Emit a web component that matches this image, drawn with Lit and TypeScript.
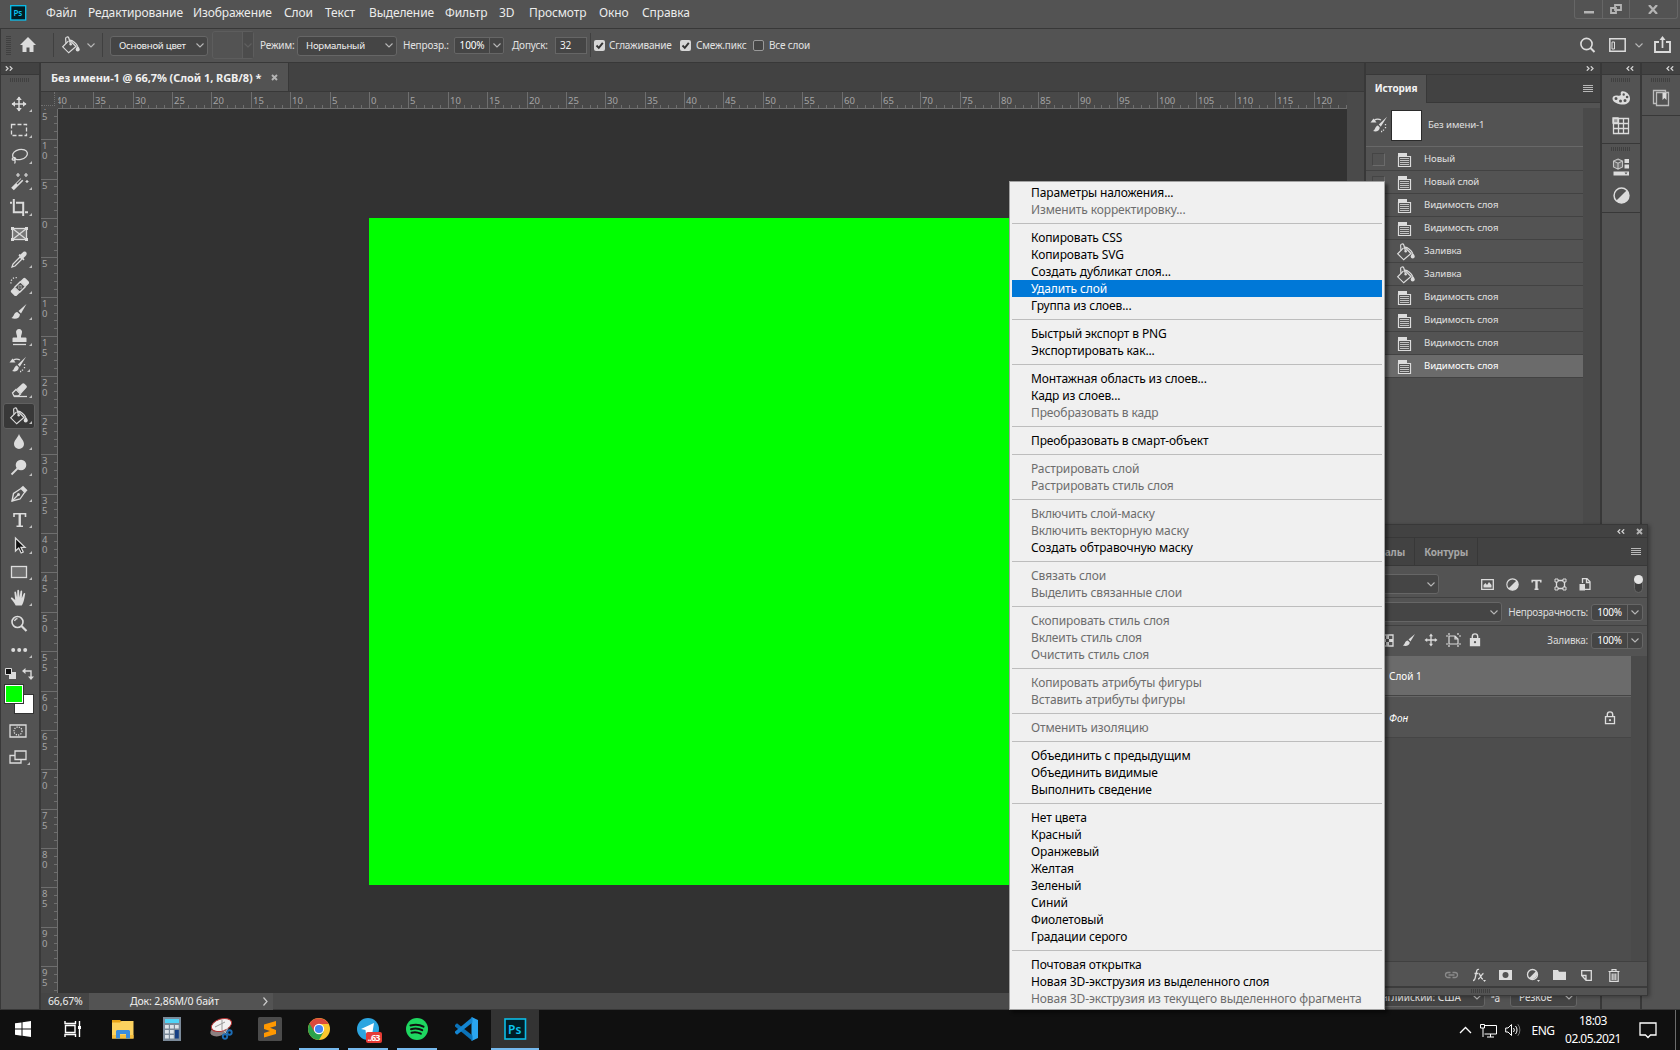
import { LitElement, html, svg, css, TemplateResult } from "lit";
import { customElement, property } from "lit/decorators.js";
import { classMap } from "lit/directives/class-map.js";

type Entry = { t: string; off?: boolean; on?: boolean } | null;

const off = (t: string): Entry => ({ t, off: true });
const it = (t: string): Entry => ({ t });

const MENU: Entry[] = [
  it("Параметры наложения..."), off("Изменить корректировку..."), null,
  it("Копировать CSS"), it("Копировать SVG"), it("Создать дубликат слоя..."),
  { t: "Удалить слой", on: true }, it("Группа из слоев..."), null,
  it("Быстрый экспорт в PNG"), it("Экспортировать как..."), null,
  it("Монтажная область из слоев..."), it("Кадр из слоев..."), off("Преобразовать в кадр"), null,
  it("Преобразовать в смарт-объект"), null,
  off("Растрировать слой"), off("Растрировать стиль слоя"), null,
  off("Включить слой-маску"), off("Включить векторную маску"), it("Создать обтравочную маску"), null,
  off("Связать слои"), off("Выделить связанные слои"), null,
  off("Скопировать стиль слоя"), off("Вклеить стиль слоя"), off("Очистить стиль слоя"), null,
  off("Копировать атрибуты фигуры"), off("Вставить атрибуты фигуры"), null,
  off("Отменить изоляцию"), null,
  it("Объединить с предыдущим"), it("Объединить видимые"), it("Выполнить сведение"), null,
  it("Нет цвета"), it("Красный"), it("Оранжевый"), it("Желтая"), it("Зеленый"),
  it("Синий"), it("Фиолетовый"), it("Градации серого"), null,
  it("Почтовая открытка"), it("Новая 3D-экструзия из выделенного слоя"),
  off("Новая 3D-экструзия из текущего выделенного фрагмента"),
];

const ic = (w: number, h: number, body: unknown) =>
  html`<svg width=${w} height=${h} viewBox="0 0 ${w} ${h}" fill="none" stroke="#dcdcdc" stroke-width="1.3">${body}</svg>`;

const F = "#dcdcdc";

const bucket = ic(20, 18, svg`
  <path d="M7.500 4.800 1.700 10.800l6 6 7.300-6.300-6.500-6.500" stroke-width="1.200" />
  <path d="M5 7.500 4.600 2.600c0-1.900 2.600-2.200 3.200-.6L9.500 8" stroke-width="1.200" />
  <circle cx="9.700" cy="8.300" r="1.200" fill=${F} stroke="none" />
  <path d="M9 4.200c2.500 0 6.500 3.200 7.500 6" stroke-width="1.300" />
  <path d="M16.700 9.800c1.200 1.500 2 2.600 2 3.800a2 2 0 0 1-4 0c0-1.200.8-2.300 2-3.800z" fill=${F} stroke="none" />`);

const histBrush = ic(18, 17, svg`
  <path d="M.5 6.500 3.500 2.500 6.500 6.500z" fill=${F} stroke="none"/>
  <path d="M4 4.500c2-1.500 5-1.500 7-.5" />
  <path d="M17 .8 8.800 8.600l2 2.200z" fill=${F} stroke="none"/>
  <path d="M8 9.500c-3 .5-2.600 4.600-5 5.500 3 1 6.600.2 6.800-3.600z" fill=${F} stroke="none"/>
  <path d="M15.500 8v1.200M15.500 11v1.200M13.500 13.500v1.200M11 15.500h1.200" />`);

const TOOLS: TemplateResult[] = [
  ic(20, 20, svg`<path d="M10 3v14M3 10h14" stroke-width="1.500"/><path d="M10 2.500 7.200 6h5.600zM10 17.500 7.200 14h5.600zM2.500 10 6 7.200v5.600zM17.500 10 14 7.200v5.600z" fill=${F} stroke="none"/>`),
  ic(20, 20, svg`<rect x="2.500" y="4.500" width="15" height="11" stroke-dasharray="4 2"/>`),
  ic(20, 20, svg`<ellipse cx="11" cy="8.500" rx="7.500" ry="5" transform="rotate(-12 11 8.500)"/><path d="M4.500 11.500c-2 1-1.500 3 .5 2.500s2-2.500-.2-2.600M6 14c0 1.500.5 2.500-.5 3.500"/>`),
  ic(20, 20, svg`<path d="M3.500 17 13 7.500" stroke-width="3.800"/><path d="M8 12 13 7" stroke="#535353" stroke-width="1.300"/><path d="M9 1v4M7 3h4M17 1v4M15 3h4M18 8v3M16.500 9.500h3" stroke-width="1.200"/>`),
  ic(20, 20, svg`<path d="M4.800 1v13.200H14M1 4.800h2M7 4.800h7.200V18M16 14.200h3" stroke-width="2"/>`),
  ic(20, 20, svg`<rect x="3.500" y="4.500" width="14" height="11" fill="#777"/><path d="M3.500 4.500l14 11M17.500 4.500l-14 11"/><path d="M2 3h3v3H2zM16 3h3v3h-3zM2 14h3v3H2zM16 14h3v3h-3z" fill=${F} stroke="none"/>`),
  ic(20, 20, svg`<path d="M3 17l1-3 7-7 2 2-7 7z"/><path d="M9.500 5.500l5 5 1-1-1-1.500c1-1 3.200-2.700 3.200-4.300 0-1.800-1.400-2.200-2.200-2.200-1.500 0-2.700 2-3.800 3l-1.200-.5z" fill=${F} stroke="none"/>`),
  ic(20, 20, svg`<g transform="rotate(-45 11 11)"><rect x="1" y="7.200" width="20" height="7.600" rx="1.500" fill=${F} stroke="none"/><rect x="6.500" y="7" width="9" height="8" fill="#535353" stroke="none"/><path d="M7 7.500v7h8v-7zM11 9v1M11 12v1M9 10.900h1M12 10.900h1" /></g><path d="M2 7.500A5 5 0 0 1 9 2" stroke-dasharray="1.200 1.600"/>`),
  ic(20, 20, svg`<path d="M17.500 2 9.500 9l2.500 2.500z" fill=${F} stroke="none"/><path d="M8.300 10c-3.800.3-3 4.800-6 6 4 1.800 8.500.5 8.700-3.500z" fill=${F} stroke="none"/>`),
  ic(20, 20, svg`<path d="M7.200 5a3 3 0 1 1 5.700 0c-.3 2-1 2.500-.9 4.500h4.500a1 1 0 0 1 1 1V14h-14v-3.500a1 1 0 0 1 1-1h3.600c.1-2-.6-2.500-.9-4.500z" fill=${F} stroke="none"/><path d="M4 16.500h13"/>`),
  histBrush,
  ic(20, 20, svg`<path d="M3.500 13 7 9.500l4.500 4.500-2.200 2H5z"/><path d="M7.500 9l6-5.500a1.500 1.500 0 0 1 2 .2l2 2a1.500 1.500 0 0 1 0 2l-5.500 6z" fill=${F} stroke="none"/><path d="M5 16.500h13"/>`),
  bucket,
  ic(20, 20, svg`<path d="M10 2c1.500 4 5 6.500 5 10a5 5 0 0 1-10 0c0-3.500 3.500-6 5-10z" fill=${F} stroke="none"/>`),
  ic(20, 20, svg`<circle cx="12" cy="7" r="5.300" fill=${F} stroke="none"/><path d="M2.500 16.500 9 10" stroke-width="1.800"/>`),
  ic(20, 20, svg`<path d="M3 17l1.500-7.500L12 4.500l3.800 3.700L11 15z"/><path d="M3 17l6-6"/><circle cx="9.500" cy="10.500" r="1.500" fill=${F} stroke="none"/><path d="M11.500 4 14 1.800l4.500 4.400-2.300 2.600z" fill=${F} stroke="none"/>`),
  ic(20, 20, svg`<path d="M5 7V3.800h11.500V7M7.500 16.300h6.500" stroke-width="1.600"/><path d="M10.750 4v12" stroke-width="2.400"/>`),
  ic(20, 20, svg`<path d="M6.500 2v13l3.200-3 2.500 5 2-1-2.200-4.700h4z" fill="#111"/>`),
  ic(20, 20, svg`<rect x="2.500" y="4.500" width="15" height="11" fill="#6f6f6f"/>`),
  ic(20, 20, svg`<path d="M6.700 17.500C5 14.500 3.300 12.300 2 10.800c-.6-1.200.9-1.600 1.800-.8l2.400 2L5.400 4.500c0-1.300 1.500-1.300 1.700 0l1 5L8.300 2.800c0-1.300 1.700-1.300 1.800 0l.4 6.700 1-6.200c.3-1.200 1.700-1 1.700.2l-.4 6.700 1.900-4.600c.5-1 1.700-.6 1.500.5-.8 3-1 8.500-3.500 11.400z" fill=${F} stroke="none"/>`),
  ic(20, 20, svg`<circle cx="8.500" cy="8" r="5.500" stroke-width="1.600"/><path d="M5.500 7a3.500 3.500 0 0 1 3-2.500"/><path d="M12.500 12l5 5" stroke-width="2.200"/>`),
  ic(20, 20, svg`<path d="M2.200 10a2 2 0 1 0 4 0 2 2 0 1 0-4 0zM8.200 10a2 2 0 1 0 4 0 2 2 0 1 0-4 0zM14.200 10a2 2 0 1 0 4 0 2 2 0 1 0-4 0z" fill=${F} stroke="none"/>`),
];

const docIcon = ic(15, 16, svg`<path d="M1.500 4.500h12v10h-12z" fill="#535353" stroke-width="1.200"/><path d="M1 1h9v4H1z" fill=${F} stroke="none"/><path d="M3 6.500h9M3 8.500h9M3 10.500h9M3 12.500h9" stroke-width=".9" stroke="#cfcfcf"/>`);

const palette = ic(20, 16, svg`<path d="M10.500 1.500C14 .5 19 4 19 8.500c0 4-3.500 6-7 6-4 0-10.500-2-10.500-6 0-2.500 2.500-3.500 4.800-3 3 .6 4-.2 3.500-1.500-.3-1 0-2.200.7-2.500z" fill=${F} stroke="none"/><path d="M3.500 8.500a1.500 1.500 0 1 0 3 0 1.500 1.500 0 1 0-3 0zM8 11a1.500 1.500 0 1 0 3 0 1.500 1.500 0 1 0-3 0zM12.500 10.500a1.500 1.500 0 1 0 3 0 1.500 1.500 0 1 0-3 0zM14.800 7a1.300 1.300 0 1 0 2.600 0 1.300 1.300 0 1 0-2.600 0zM11.500 4.500a1.200 1.200 0 1 0 2.400 0 1.200 1.200 0 1 0-2.400 0z" fill="#535353" stroke="none"/>`);
const swatches = ic(18, 18, svg`<path d="M1 1h5v5H1z" fill="#999"/><path d="M1.500 1.500h15v15h-15zM6.500 1.500v15M11.500 1.500v15M1.500 6.500h15M1.500 11.500h15"/>`);
const library = ic(18, 18, svg`<path d="M6 1 10.500 3v6L6 11.200 1.500 9V3zM1.500 3 6 5.200 10.500 3M6 5.200v6" fill="#707070" stroke="#c4c4c4" stroke-width="1.100"/><path d="M12.500 1H17v4h-4.500zM12.500 6.500H17v4h-4.500zM1.500 13.500H17v4H1.500z" fill=${F} stroke="none"/><path d="M12.500 14.500h3l-1.500 2z" fill="#535353" stroke="none"/>`);
const half = (s: number, c = F) => html`<svg width=${s} height=${s} viewBox="0 0 16 16"><circle cx="8" cy="8" r="7" fill="none" stroke=${c} stroke-width="1.400"/><path d="M13 3A7 7 0 0 1 3 13z" fill=${c}/></svg>`;
const book = ic(18, 18, svg`<path d="M4 14.500H1.500v-13h12V3" stroke="#bbb"/><path d="M4.500 3.500h12v13h-12z" stroke="#bbb"/><path d="M10.500 4h4v7l-2-2-2 2z" fill=${F} stroke="none"/>`);
const chev = html`<svg class="chev" width="8" height="5" viewBox="0 0 8 5"><path d="M.5.5 4 4 7.500.5" fill="none" stroke="#b8b8b8" stroke-width="1.100"/></svg>`;
const burger = html`<svg width="10" height="8"><path d="M0 .5h10M0 2.500h10M0 4.500h10M0 6.500h10" stroke="#b8b8b8"/></svg>`;
const dbl = (left: boolean) => html`<svg width="8" height="5" viewBox="0 0 8 5"><path d=${left ? "M3.200.3 1 2.500l2.200 2.200M7.200.3 5 2.500l2.200 2.200" : "M.8.3 3 2.500.8 4.700M4.800.3 7 2.500 4.800 4.700"} fill="none" stroke="#d0d0d0" stroke-width="1.300"/></svg>`;
const cross = html`<svg width="7" height="7"><path d="M1 1l5 5M6 1 1 6" stroke="#b4b4b4" stroke-width="1.900"/></svg>`;
const check = html`<svg width="11" height="11"><rect width="11" height="11" rx="2" fill="#d6d6d6"/><path d="M2.500 5.500l2.300 2.300 4-5" fill="none" stroke="#333" stroke-width="1.900"/></svg>`;

const STEP = 39.38;

@customElement("ps-ruler")
export class PsRuler extends LitElement {
  @property({ type: Boolean }) vertical = false;
  @property({ type: Number }) origin = 0;
  @property({ type: Number }) length = 0;
  static styles = css`
    :host { display: block; overflow: hidden; background: #484848; }
    svg { display: block; }
    text { font: 9.500px "Noto Sans", sans-serif; fill: #a4a4a4; }
    .tick { stroke: #6e6e6e; }
  `;
  render() {
    const parts: unknown[] = [];
    const first = -Math.ceil(this.origin / STEP) * 5;
    for (let n = first; ; n++) {
      const p = Math.round(this.origin + (n / 5) * STEP) + 0.5;
      if (p > this.length) break;
      const major = n % 5 === 0;
      const label = String(Math.abs(n));
      if (this.vertical) {
        parts.push(svg`<path class="tick" d="M${major ? 0 : 13} ${p}H17"/>`);
        if (major) parts.push([...label].map((c, i) => svg`<text x="1" y=${p + 9.5 + i * 10}>${c}</text>`));
      } else {
        parts.push(svg`<path class="tick" d="M${p} ${major ? 0 : 13}V17"/>`);
        if (major) parts.push(svg`<text x=${p + 1.5} y="12">${label}</text>`);
      }
    }
    return this.vertical
      ? html`<svg width="17" height=${this.length}>${parts}<path class="tick" d="M16.500 0V${this.length}"/></svg>`
      : html`<svg width=${this.length} height="17">${parts}<path class="tick" d="M0 16.500H${this.length}"/></svg>`;
  }
}

@customElement("ps-context-menu")
export class PsContextMenu extends LitElement {
  static styles = css`
    :host { display: block; box-sizing: border-box; background: #f0f0f0; border: 1px solid #a2a2a2; padding: 2px; box-shadow: 3px 3px 3px rgba(0, 0, 0, .45); }
    .item { height: 17px; padding-left: 19px; font: 12px/17px "Noto Sans", sans-serif; letter-spacing: -.12px; color: #000; white-space: nowrap; }
    .off { color: #6d6d6d; }
    .on { background: #0078d7; color: #fff; }
    .sep { height: 11px; display: flex; align-items: center; }
    .sep::before { content: ""; flex: 1; height: 1px; background: #bdbdbd; }
  `;
  render() {
    return MENU.map((e) => e
      ? html`<div class=${classMap({ item: true, off: !!e.off, on: !!e.on })}>${e.t}</div>`
      : html`<div class="sep"></div>`);
  }
}

@customElement("ps-layers")
export class PsLayers extends LitElement {
  static styles = css`
    :host { display: flex; flex-direction: column; box-sizing: border-box; background: #535353; border: 1px solid #383838; font: 10px "Noto Sans", sans-serif; color: #dcdcdc; box-shadow: 2px 1px 4px rgba(0, 0, 0, .3); }
    svg { display: block; }
    .head { height: 12px; background: #424242; border-bottom: 1px solid #383838; display: flex; justify-content: flex-end; align-items: center; gap: 11px; padding-right: 4px; }
    .tabs { height: 27px; background: #424242; border-bottom: 1px solid #383838; display: flex; align-items: center; }
    .tab { height: 27px; line-height: 28px; box-sizing: border-box; border-right: 1px solid #383838; font-weight: 700; color: #a6a6a6; text-align: right; letter-spacing: -.2px; }
    .t1 { width: 151px; padding-right: 9px; }
    .t2 { width: 63px; padding-right: 9px; }
    .grow { flex: 1; }
    .burger { margin-right: 6px; }
    .row { box-sizing: border-box; display: flex; align-items: center; border-bottom: 1px solid #404040; }
    .r1 { height: 32px; padding-top: 5px; } .r2 { height: 28px; padding-top: 1px; } .r3 { height: 30px; border: 0; padding-bottom: 2px; }
    .sel { box-sizing: border-box; height: 20px; border: 1px solid #666; border-radius: 3px; background: #454545; display: flex; align-items: center; justify-content: flex-end; padding-right: 3px; }
    .s1 { width: 175px; } .s2 { width: 238px; }
    .filters { display: flex; width: 110px; margin-left: 42px; justify-content: space-between; align-items: center; }
    .toggle { width: 9px; height: 18px; border-radius: 5px; background: #3d3d3d; margin: -1px 4px 0 auto; border: 1px solid #666; box-sizing: border-box; }
    .knob { width: 9px; height: 9px; border-radius: 5px; background: #e4e4e4; margin: -1px; }
    .lab { margin-left: auto; margin-right: 3px; letter-spacing: -.22px; }
    .num { box-sizing: border-box; width: 52px; height: 17px; border: 1px solid #666; border-radius: 3px; background: #454545; display: grid; grid-template-columns: 35px 1fr; align-items: center; color: #fff; margin-right: 4px; text-align: center; letter-spacing: -.2px; }
    .num .b { border-left: 1px solid #666; height: 15px; display: grid; place-items: center; }
    .locks { display: flex; gap: 8px; align-items: center; margin-left: 117px; }
    .body { flex: 1; display: flex; min-height: 0; }
    .list { width: 367px; background: #4d4d4d; }
    .bar { flex: 1; background: #4a4a4a; }
    .layer { box-sizing: border-box; display: flex; align-items: center; padding-left: 125px; background: #535353; }
    .l1 { height: 40px; background: #6b6b6b; border-bottom: 1px solid #454545; color: #fff; }
    .l2 { height: 42px; border-top: 1px solid #666; border-bottom: 1px solid #454545; font-style: italic; color: #fff; padding-top: 1px; }
    .l2 svg { margin-left: auto; margin-right: 15px; }
    .foot { height: 24px; border-top: 1px solid #404040; display: grid; grid-template-columns: repeat(7, 27px); place-items: center; justify-content: start; padding: 1px 0 0 174px; box-sizing: content-box; margin-bottom: -1px; }
    .grip { height: 7px; border-top: 2px solid #3c3c3c; display: flex; justify-content: center; padding-left: 50px; }
    .dots { width: 19px; height: 4px; margin: 1px 0 0 0; background: repeating-linear-gradient(90deg, #404040 0 1px, transparent 1px 2px); }
  `;
  render() {
    const lock = (fill: boolean) => html`<svg width="12" height="14" viewBox="0 0 12 14"><path d="M1.500 5.700h9v7h-9z" fill=${fill ? F : "none"} stroke=${F} stroke-width="1.300"/><path d="M3.300 5.500V3.600a2.700 2.700 0 0 1 5.400 0v1.900" fill="none" stroke=${F} stroke-width="1.400"/><circle cx="6" cy="9.200" r="1.100" fill=${fill ? "#535353" : F}/></svg>`;
    return html`
      <div class="head">${dbl(true)}${cross}</div>
      <div class="tabs"><div class="tab t1">Каналы</div><div class="tab t2">Контуры</div><span class="grow"></span><span class="burger">${burger}</span></div>
      <div class="row r1">
        <div class="sel s1">${chev}</div>
        <div class="filters">
          ${ic(13, 11, svg`<path d="M.7.700h11.600v9.600H.7z"/><path d="M2.500 8.500V6l2-2 1.500 2 2-3 2.500 3v2.500z" fill=${F} stroke="none"/>`)}
          ${half(13)}
          ${ic(11, 11, svg`<path d="M1.200 3.500V1.400h8.600v2.100M3.500 10.300h4" stroke-width="1.500"/><path d="M5.500 1v9.500" stroke-width="2.400"/>`)}
          ${ic(13, 13, svg`<path d="M2.500 2.500h8v8h-8z"/><path d="M1 1h3v3H1zM9 1h3v3H9zM1 9h3v3H1zM9 9h3v3H9z" fill="#535353" stroke-width="1"/>`)}
          ${ic(12, 13, svg`<path d="M3.500 5V.700H8L11 3.700v7.600H6"/><path d="M7.500.500v4H11" /><path d="M.5 6H6v6.500H.5z" fill=${F} stroke="none"/>`)}
        </div>
        <div class="toggle"><div class="knob"></div></div>
      </div>
      <div class="row r2"><div class="sel s2">${chev}</div><span class="lab">Непрозрачность:</span><div class="num">100%<span class="b">${chev}</span></div></div>
      <div class="row r3">
        <div class="locks">
          ${ic(13, 13, svg`<path d="M1 1h11v11H1z"/><path d="M5 1h3v4H5zM1 5h4v3H1zM8 5h4v3H8zM5 8h3v4H5z" fill=${F} stroke="none"/>`)}
          ${ic(14, 14, svg`<path d="M13 1 6.500 6.500l2 2z" fill=${F} stroke="none"/><path d="M5.800 7.500c-3 .2-2.500 3.800-5 5 3 1 6.800.3 7-3z" fill=${F} stroke="none"/>`)}
          ${ic(14, 14, svg`<path d="M7 2v10M2 7h10"/><path d="M7 .5 5 3.200h4zM7 13.500 5 10.800h4zM.5 7 3.200 5v4zM13.500 7 10.800 5v4z" fill=${F} stroke="none"/>`)}
          ${ic(15, 14, svg`<path d="M3 0v2M0 3h2M3 3h6l3 3v5H3zM9 3v3h3M12 0v2M13 3h2M3 12v2M0 11h2M13 11h2M12 12v2" stroke-width="1.200"/>`)}
          ${lock(true)}
        </div>
        <span class="lab">Заливка:</span><div class="num">100%<span class="b">${chev}</span></div>
      </div>
      <div class="body">
        <div class="list"><div class="layer l1">Слой 1</div><div class="layer l2">Фон${lock(false)}</div></div>
        <div class="bar"></div>
      </div>
      <div class="foot">
        ${ic(15, 8, svg`<path d="M6.500 1.500H4a2.500 2.500 0 0 0 0 5h2.500M8.500 1.500H11a2.500 2.500 0 0 1 0 5H8.500M4.500 4h6" stroke="#8a8a8a"/>`)}
        ${ic(14, 14, svg`<path d="M1 12.500c2 0 2-1.500 2.500-4L4.700 3C5 1.500 6 1 7 1.500M2.500 5.500H6M6.500 5.500c2-.5 2 6 4.500 5.500M11.500 5.500c-2 0-3 5.500-5.500 5.500"/><path d="M11 12h3l-1.500 2z" fill=${F} stroke="none"/>`)}
        ${ic(13, 10, svg`<path d="M0 0h13v10H0z" fill=${F} stroke="none"/><circle cx="6.500" cy="5" r="3" fill="#535353" stroke="none"/>`)}
        ${ic(14, 14, svg`<circle cx="6.500" cy="6.500" r="5"/><path d="M10.200 3A5.200 5.200 0 0 1 3 10.200zM11 12h3l-1.500 2z" fill=${F} stroke="none"/>`)}
        ${ic(13, 10, svg`<path d="M0 0h5l1 1.800h7V10H0z" fill=${F} stroke="none"/>`)}
        ${ic(11, 11, svg`<path d="M.7 5V.7h9.600v9.600H5M5 10.300 .7 5.500H5z"/>`)}
        ${ic(12, 13, svg`<path d="M.5 2.500h11M4 2V.7h4V2M1.800 2.800v9.500h8.400V2.800M4.200 4.500V11M6 4.500V11M7.800 4.500V11" stroke-width="1.200"/>`)}
      </div>
      <div class="grip"><span class="dots"></span></div>
    `;
  }
}

@customElement("ps-history")
export class PsHistory extends LitElement {
  static styles = css`
    :host { display: flex; flex-direction: column; background: #4f4f4f; font: 9.6px "Noto Sans", sans-serif; letter-spacing: -.08px; color: #e0e0e0; }
    svg { display: block; }
    .tabs { height: 27px; background: #424242; border-bottom: 1px solid #383838; display: flex; }
    .tab { width: 61px; height: 28px; line-height: 27px; font-size: 10px; letter-spacing: -.1px; background: #535353; font-weight: 700; text-align: center; color: #f2f2f2; border-right: 1px solid #383838; box-sizing: border-box; }
    .burger { margin: 10px 7px 0 auto; }
    .body { flex: 1; display: flex; }
    .list { width: 217px; }
    .bar { flex: 1; background: #4a4a4a; border-top: 5px solid #535353; }
    .snap { height: 44px; background: #535353; border-bottom: 1px solid #686868; display: flex; align-items: center; padding-left: 4px; box-sizing: border-box; }
    .thumb { width: 29px; height: 29px; border: 1px solid #2b2b2b; background: #fff; margin: 2px 6px 0 3px; }
    .row { height: 23px; box-sizing: border-box; border-bottom: 1px solid #424242; background: #535353; display: grid; grid-template-columns: 22px 30px 1fr; align-items: center; padding: 1px 0 0 6px; }
    .row:nth-child(2) { height: 24px; padding-top: 2px; }
    .row span { padding-bottom: 3px; }
    .box { width: 11px; height: 11px; border: 1px solid #454545; border-right-color: #6b6b6b; border-bottom-color: #6b6b6b; }
    .ico { padding-left: 3px; }
    .fill { padding-left: 2px; }
    .cur { background: #6b6b6b; color: #fff; }
  `;
  render() {
    const v = "Видимость слоя";
    const rows = ["Новый", "Новый слой", v, v, "Заливка", "Заливка", v, v, v, v];
    return html`
      <div class="tabs"><div class="tab">История</div><span class="burger">${burger}</span></div>
      <div class="body">
        <div class="list">
          <div class="snap">${histBrush}<div class="thumb"></div>Без имени-1</div>
          ${rows.map((r, i) => {
            const fill = r === "Заливка";
            return html`<div class=${classMap({ row: true, cur: i === 9 })}><i class="box"></i><div class=${classMap({ ico: !fill, fill })}>${fill ? bucket : docIcon}</div><span>${r}</span></div>`;
          })}
        </div>
        <div class="bar"></div>
      </div>`;
  }
}

@customElement("win-taskbar")
export class WinTaskbar extends LitElement {
  static styles = css`
    :host { display: flex; height: 40px; background: #101010; color: #fff; font: 12px "Noto Sans", sans-serif; }
    svg { display: block; }
    .apps { display: grid; grid-template-columns: 47px 52px repeat(9, 49px); }
    .app { display: grid; place-items: center; border-bottom: 2px solid transparent; box-sizing: border-box; height: 40px; margin-right: 1px; }
    .run { border-color: #76b9ed; margin: 0 5px 0 4px; }
    .cur { background: #333; border-color: #76b9ed; }
    .tray { margin-left: auto; display: grid; grid-template-columns: 24px 23px 26px 34px 66px 43px 11px; align-items: center; justify-items: center; }
    .eng { letter-spacing: -.5px; }
    .clock { text-align: center; line-height: 18px; letter-spacing: -.55px; }
    .show { width: 1px; height: 40px; background: #6c6c6c; justify-self: start; margin-left: 6px; }
    text { font: 700 9px "Noto Sans", sans-serif; }
    .ps { font: 600 12px "Noto Sans", sans-serif; }
  `;
  render() {
    const apps: [unknown, string][] = [
      [svg`<path d="M4 6.300l6.500-.9V11.500H4zM11.500 5.200 20 4v7.500h-8.500zM4 12.500h6.500v6.200L4 17.800zM11.500 12.500H20V20l-8.500-1.200z" fill="#fff"/>`, ""],
      [svg`<path d="M4 4v2.500h10.500V4M4 20v-2.500h10.500V20M4.500 8.500h9.500v7H4.500zM18.500 4v16" fill="none" stroke="#fff" stroke-width="1.400"/><path d="M17 9h3v3h-3z" fill="#fff"/>`, ""],
      [svg`<path d="M1 3h8l2 2v4H1z" fill="#e8a317"/><path d="M1 5.500H9L10.500 4h12v17.500H1z" fill="#fcd25f"/><path d="M1 18h21.500v3.500H1z" fill="#f5bd3d"/><path d="M5 21.500V14l1-1h12l1 1v7.500h-4V17H9v4.500z" fill="#3b8ddd"/>`, ""],
      [svg`<path d="M3 0h18v24H3z" fill="#7b8a99"/><path d="M5 2h14v4H5z" fill="#4fd4f7"/><path d="M5 8h3.800v3.500H5zM10 8h3.800v3.500H10zM5 13h3.800v3.500H5zM10 13h3.800v3.500H10zM5 18h3.800v3.500H5zM10 18h3.800v3.500H10zM15 8h3.700v3.500H15z" fill="#dfe5ea"/><path d="M15 13h3.800v8.500H15z" fill="#153f84"/>`, ""],
      [svg`<ellipse cx="10" cy="14" rx="9" ry="5" transform="rotate(-15 10 14)" fill="#8b7f80"/><ellipse cx="12.500" cy="8" rx="10.500" ry="6" transform="rotate(-18 12.500 8)" fill="#f2f2f2" stroke="#b53434"/><path d="M6 10l10-5M13 3v10" stroke="#999"/><path d="M14.500 13.500 18 17M19 11l-4 7" stroke="#bbb"/><circle cx="16" cy="19.500" r="2.200" fill="none" stroke="#1d6cb5" stroke-width="1.900"/><circle cx="20.500" cy="15.500" r="2.200" fill="none" stroke="#1d6cb5" stroke-width="1.900"/>`, ""],
      [svg`<rect width="24" height="24" rx="1.500" fill="#4b4b4b"/><path d="M6 7.500 18 4v5l-6 1.800L18 13v4L6 20.500V16l6-2-6-2z" fill="#ff9800"/>`, ""],
      [svg`<circle cx="12" cy="12" r="11" fill="#fbc72e"/><path d="M12 12 2.500 6.500A11 11 0 0 0 12 23l4.800-8.500z" fill="#2ba24c"/><path d="M2.500 6.500A11 11 0 0 1 21.600 7H12l-4.500 8z" fill="#dc4a3d"/><circle cx="12" cy="12" r="5.200" fill="#fff"/><circle cx="12" cy="12" r="4.100" fill="#4385f4"/>`, "run"],
      [svg`<circle cx="12" cy="12" r="11" fill="#2ca5e0"/><path d="M5 12 18 6l-2 12-4-3-2 2-.5-4z" fill="#fff"/><rect x="10" y="15" width="16" height="11" rx="2" fill="#e53b36"/><text x="11.500" y="24" fill="#fff" textLength="13">..63</text>`, "run"],
      [svg`<circle cx="12" cy="12" r="11" fill="#1ed760"/><path d="M5.500 8.500c4.500-1.300 9.500-.8 13 1.200M6 12.200c4-1.100 8-.7 11.200 1M6.500 15.700c3.400-.8 6.500-.4 9.300 1" fill="none" stroke="#101010" stroke-width="2" stroke-linecap="round"/>`, "run"],
      [svg`<path d="M17.500 0 24 3v18l-6.500 3z" fill="#2aa5f1"/><path d="M1 8l2-1.800L18.500 18.500V24L1 9.500z" fill="#0b72b8"/><path d="M1 16l2 1.800L18.500 5.500V0L1 14.500z" fill="#1485d1"/>`, ""],
      [svg`<rect x="2" y="2" width="20.500" height="20" fill="#001d26" stroke="#0bbce6" stroke-width="1.600"/><text class="ps" x="5" y="16.500" fill="#0bc5ef">Ps</text>`, "cur"],
    ];
    return html`
      <div class="apps">${apps.map(([b, c]) => html`<div class=${classMap({ app: true, run: c === "run", cur: c === "cur" })}><svg width="24" height="24" overflow="visible">${b}</svg></div>`)}</div>
      <div class="tray">
        <svg width="13" height="8"><path d="M1 7l5.500-5.500L12 7" fill="none" stroke="#fff" stroke-width="1.300"/></svg>
        <svg width="17" height="15"><path d="M4.500 2.500h12v8.500h-12M10.500 11v3M7 14h7M3 4.500V14" fill="none" stroke="#fff"/><path d="M.5 1.500h4v3.500h-4z" fill="#101010" stroke="#fff"/></svg>
        <svg width="17" height="14"><path d="M.7 5H3L6.500 1.500v11L3 9H.7z" fill="none" stroke="#fff"/><path d="M8.500 5a3 3 0 0 1 0 4M10.500 3a6 6 0 0 1 0 8" fill="none" stroke="#fff"/><path d="M12.800 1.200a9 9 0 0 1 0 11.600" fill="none" stroke="#777"/></svg>
        <span class="eng">ENG</span>
        <div class="clock">18:03<br />02.05.2021</div>
        <svg width="18" height="17"><path d="M1 1h16v12h-5.500L9 15.500 6.500 13H1z" fill="none" stroke="#fff" stroke-width="1.300"/></svg>
        <i class="show"></i>
      </div>`;
  }
}

@customElement("app-root")
export class AppRoot extends LitElement {
  static styles = css`
    :host { display: flex; flex-direction: column; position: relative; width: 1680px; height: 1050px; overflow: hidden; background: #535353; color: #e2e2e2; font: 10px "Noto Sans", sans-serif; white-space: nowrap; }
    svg { display: block; }
    .menubar { height: 28px; box-sizing: border-box; display: grid; grid-template-columns: 36px 42px 105px 91px 41px 44px 76px 54px 30px 70px 43px 1fr 106px; padding-left: 10px; font-size: 12px; line-height: 26px; color: #ececec; letter-spacing: -.1px; }
    .logo { margin-top: 5px; }
    .logo text { font: 600 8px "Noto Sans", sans-serif; }
    .wbtn { height: 18px; border: 1px solid #666; border-top: 0; border-radius: 0 0 3px 3px; display: grid; grid-template-columns: 27px 27px 1fr; width: 102px; }
    .wbtn span { display: grid; place-items: center; border-left: 1px solid #666; }
    .wbtn span:first-child { border: 0; }
    .wbtn span:last-child { padding-right: 2px; }
    .options { box-sizing: border-box; height: 35px; border-top: 1px solid #383838; border-left: 1px solid #383838; border-bottom: 1px solid #383838; display: grid; align-items: center; letter-spacing: -.17px; padding-bottom: 1px;
      grid-template-columns: 5px 14px 33px 8px 26px 15px 8px 102px 48px 37px 106px 51px 58px 43px 35px 4px 15px 71px 16px 57px 16px 1fr 29px 26px 19px 26px; }
    .grip { width: 5px; height: 19px; background: repeating-linear-gradient(#404040 0 1px, transparent 1px 2px); }
    .vsep { width: 1px; height: 24px; background: #404040; }
    .sel, .field { box-sizing: border-box; height: 20px; background: #454545; border: 1px solid #666; border-radius: 3px; display: flex; align-items: center; justify-content: space-between; padding: 0 3px 0 8px; color: #f0f0f0; }
    .sel { font-size: 9.6px; letter-spacing: -.25px; margin-top: 1px; }
    .s1 { width: 98px; } .s2 { width: 100px; }
    .dis { width: 42px; height: 28px; box-sizing: border-box; border: 1px solid #5f5f5f; border-radius: 3px; display: grid; grid-template-columns: 29px 1fr; align-items: center; opacity: .9; }
    .dis span { height: 26px; border-left: 1px solid #5f5f5f; background: #4c4c4c; display: grid; place-items: center; }
    .dis .chev { opacity: .2; }
    .num { box-sizing: border-box; width: 50px; height: 17px; border: 1px solid #666; border-radius: 2px; background: #454545; display: grid; grid-template-columns: 34px 1fr; align-items: center; text-align: center; color: #fff; }
    .num span { height: 15px; border-left: 1px solid #666; display: grid; place-items: center; }
    .field { width: 32px; height: 17px; padding: 0 4px; border-radius: 0; }
    .check { width: 9px; height: 9px; border: 1px solid #999; border-radius: 2px; background: #454545; }
    .work { flex: 1; min-height: 0; display: grid; grid-template-columns: 38px 1323px 234px 38px 38px; column-gap: 2px; background: #383838; border-left: 1px solid #383838; border-bottom: 1px solid #383838; }
    .tools { background: #535353; display: flex; flex-direction: column; }
    .head { height: 11px; background: #424242; border-bottom: 1px solid #383838; display: flex; align-items: center; }
    .tools .head { padding-left: 4px; }
    .head.r { justify-content: flex-end; padding-right: 6px; }
    .hgrip { width: 19px; height: 4px; background: repeating-linear-gradient(90deg, #404040 0 1px, transparent 1px 2px); margin: 3px 0 2px 9px; }
    .toolset { margin-top: 7px; }
    .tool { box-sizing: border-box; width: 32px; height: 26px; margin-left: 2px; padding-left: 5px; display: flex; align-items: center; border: 1px solid transparent; border-radius: 3px; }
    .tool .more { align-self: flex-end; margin: 0 0 4px; width: 0; height: 0; border-left: 3px solid transparent; border-bottom: 3px solid #c0c0c0; }
    .active { background: #383838; border-color: #606060; }
    .mini { display: flex; gap: 6px; margin: 5px 0 0 4px; height: 14px; }
    .colors { display: grid; width: 31px; height: 31px; margin: 2px 0 0 3px; }
    .fg, .bg { grid-area: 1 / 1; width: 20px; height: 20px; box-sizing: border-box; border: 1px solid #333; }
    .fg { background: #00ff00; box-shadow: inset 0 0 0 1px #fff; z-index: 1; }
    .bg { background: #fff; margin: 10px 0 0 10px; }
    .modes { margin: 3px 0 0 0; }
    .doc { display: grid; grid-template-rows: 29px 17px 1fr 16px; background: #4a4a4a; min-width: 0; }
    .tabs { background: #424242; border-bottom: 1px solid #383838; }
    .tab { width: 248px; height: 28px; box-sizing: border-box; background: #535353; display: flex; align-items: center; justify-content: space-between; padding: 0 10px 0 10px; font-size: 11px; font-weight: 700; letter-spacing: -.07px; border-right: 1px solid #383838; color: #f0f0f0; }
    .hr { display: grid; grid-template-columns: 17px 1289px; }
    .corner { background: #484848; border-right: 1px dotted #707070; border-bottom: 1px dotted #707070; margin: 0 3px 3px 0; }
    .mid { display: grid; grid-template-columns: 17px 1289px; min-height: 0; overflow: hidden; }
    .canvas { background: #323232; padding: 109px 0 0 311px; }
    .page { width: 960px; height: 667px; background: #00ff00; }
    .status { display: grid; grid-template-columns: 48px 184px; line-height: 17px; color: #f0f0f0; font-size: 10.500px; letter-spacing: -.15px; background: #4a4a4a; }
    .zoom { background: #454545; padding-left: 7px; }
    .info { background: #535353; display: flex; justify-content: space-between; align-items: center; padding: 0 5px 0 41px; }
    .col { display: flex; flex-direction: column; background: #535353; min-width: 0; }
    .hist { flex: 1; }
    .char { height: 14px; background: #535353; display: grid; grid-template-columns: 119px 25px 67px; grid-template-rows: 14px; align-items: end; color: #e8e8e8; }
    .cs { box-sizing: border-box; height: 20px; margin-bottom: 2px; border: 1px solid #666; border-radius: 3px; background: #454545; display: flex; align-items: center; justify-content: space-between; padding: 0 3px 0 8px; }
    .aa { padding: 0 0 4px 6px; }
    .set { border-bottom: 1px solid #383838; box-sizing: border-box; padding-bottom: 3px; }
    .set .i { height: 28px; display: grid; place-items: center; }
    .ctx { position: absolute; left: 1009px; top: 181px; width: 376px; height: 829px; z-index: 3; }
    .layers { position: absolute; left: 1263px; top: 524px; width: 385px; height: 472px; z-index: 2; }
  `;
  render() {
    const menu = ["Файл", "Редактирование", "Изображение", "Слои", "Текст", "Выделение", "Фильтр", "3D", "Просмотр", "Окно", "Справка"];
    return html`
      <div class="menubar">
        <svg class="logo" width="17" height="16"><rect x=".7" y=".7" width="15" height="14.300" fill="#001d26" stroke="#0bc0ee" stroke-width="1.300"/><text x="3.500" y="11" fill="#0bc5ef">Ps</text></svg>
        ${menu.map((m) => html`<span>${m}</span>`)}
        <div class="wbtn">
          <span><svg width="10" height="10"><path d="M0 7h10v2.500H0z" fill="#b4b4b4"/></svg></span>
          <span><svg width="12" height="10"><path d="M5 1h6v5H5zM1 4h5v5H1z" fill="none" stroke="#b4b4b4" stroke-width="1.800"/></svg></span>
          <span><svg width="10" height="9"><path d="M1 0l8 9M9 0 1 9" stroke="#b4b4b4" stroke-width="2.200"/></svg></span>
        </div>
      </div>
      <div class="options">
        <i></i><i class="grip"></i>
        ${ic(16, 16, svg`<path d="M8 0 0 8h2.500v7h4v-4.500h3V15h4V8H16z" fill=${F} stroke="none"/>`)}
        <i class="vsep"></i>${bucket}${chev}<i class="vsep"></i>
        <div class="sel s1">Основной цвет${chev}</div>
        <div class="dis"><i></i><span>${chev}</span></div>
        <span>Режим:</span><div class="sel s2">Нормальный${chev}</div>
        <span>Непрозр.:</span><div class="num">100%<span>${chev}</span></div>
        <span>Допуск:</span><div class="field">32</div><i class="vsep"></i>
        ${check}<span>Сглаживание</span>${check}<span>Смеж.пикс</span><i class="check"></i><span>Все слои</span>
        ${ic(16, 16, svg`<circle cx="6.500" cy="7" r="5.600" stroke-width="1.600"/><path d="M10.500 11l4 4" stroke-width="2"/>`)}
        ${ic(17, 14, svg`<path d="M.8.800h15.400v12.400H.8z" stroke-width="1.500"/><path d="M3 4h2.500v7H3z" stroke-width="1"/>`)}
        ${chev}
        ${ic(17, 18, svg`<path d="M5 6H1v10h15V6h-4" stroke-width="1.900"/><path d="M8.500 12V2" stroke-width="1.700"/><path d="M8.500 0 5.500 4h6z" fill=${F} stroke="none"/>`)}
      </div>
      <div class="work">
        <div class="tools">
          <div class="head">${dbl(false)}</div>
          <div class="hgrip"></div>
          <div class="toolset">
            ${TOOLS.map((t, i) => html`<div class=${classMap({ tool: true, active: i === 12 })}>${t}${i === 5 || i === 20 ? "" : html`<i class="more"></i>`}</div>`)}
          </div>
          <div class="mini">
            <svg width="11" height="11"><path d="M4 4h7v7H4z" fill=${F}/><path d="M.5.500h6v6h-6z" fill="#111" stroke="#ddd"/></svg>
            <svg width="12" height="12"><path d="M3 3h6v6" fill="none" stroke=${F} stroke-width="1.400"/><path d="M0 3l3.500-3v6zM9 12l-3-3.500h6z" fill=${F}/></svg>
          </div>
          <div class="colors"><div class="fg"></div><div class="bg"></div></div>
          <div class="modes">
            <div class="tool">${ic(18, 14, svg`<path d="M1 1h16v12H1z"/><circle cx="9" cy="7" r="4" stroke-dasharray="1.200 1.200"/>`)}</div>
            <div class="tool">${ic(18, 14, svg`<path d="M1 5.500h11v7.500H1z"/><path d="M6 1h11v8.500H6z" fill="#535353"/>`)}<i class="more"></i></div>
          </div>
        </div>
        <div class="doc">
          <div class="tabs"><div class="tab">Без имени-1 @ 66,7% (Слой 1, RGB/8) *${cross}</div></div>
          <div class="hr"><div class="corner"></div><ps-ruler .origin=${311} .length=${1289}></ps-ruler></div>
          <div class="mid"><ps-ruler vertical .origin=${109} .length=${884}></ps-ruler><div class="canvas"><div class="page"></div></div></div>
          <div class="status"><span class="zoom">66,67%</span><div class="info">Док: 2,86M/0 байт<svg width="5" height="9"><path d="M.5.500 4 4.500.5 8.500" fill="none" stroke="#ccc" stroke-width="1.200"/></svg></div></div>
        </div>
        <div class="col">
          <div class="head r">${dbl(false)}</div>
          <ps-history class="hist"></ps-history>
          <div class="char"><div class="cs">Английский: США${chev}</div><span class="aa">ªa</span><div class="cs">Резкое${chev}</div></div>
        </div>
        <div class="col">
          <div class="head r">${dbl(true)}</div>
          <div class="set"><div class="hgrip"></div><div class="i">${palette}</div><div class="i">${swatches}</div></div>
          <div class="set"><div class="hgrip"></div><div class="i">${library}</div><div class="i">${half(17)}</div></div>
        </div>
        <div class="col">
          <div class="head r">${dbl(true)}</div>
          <div class="set"><div class="hgrip"></div><div class="i">${book}</div></div>
        </div>
      </div>
      <win-taskbar></win-taskbar>
      <ps-layers class="layers"></ps-layers>
      <ps-context-menu class="ctx"></ps-context-menu>
    `;
  }
}
